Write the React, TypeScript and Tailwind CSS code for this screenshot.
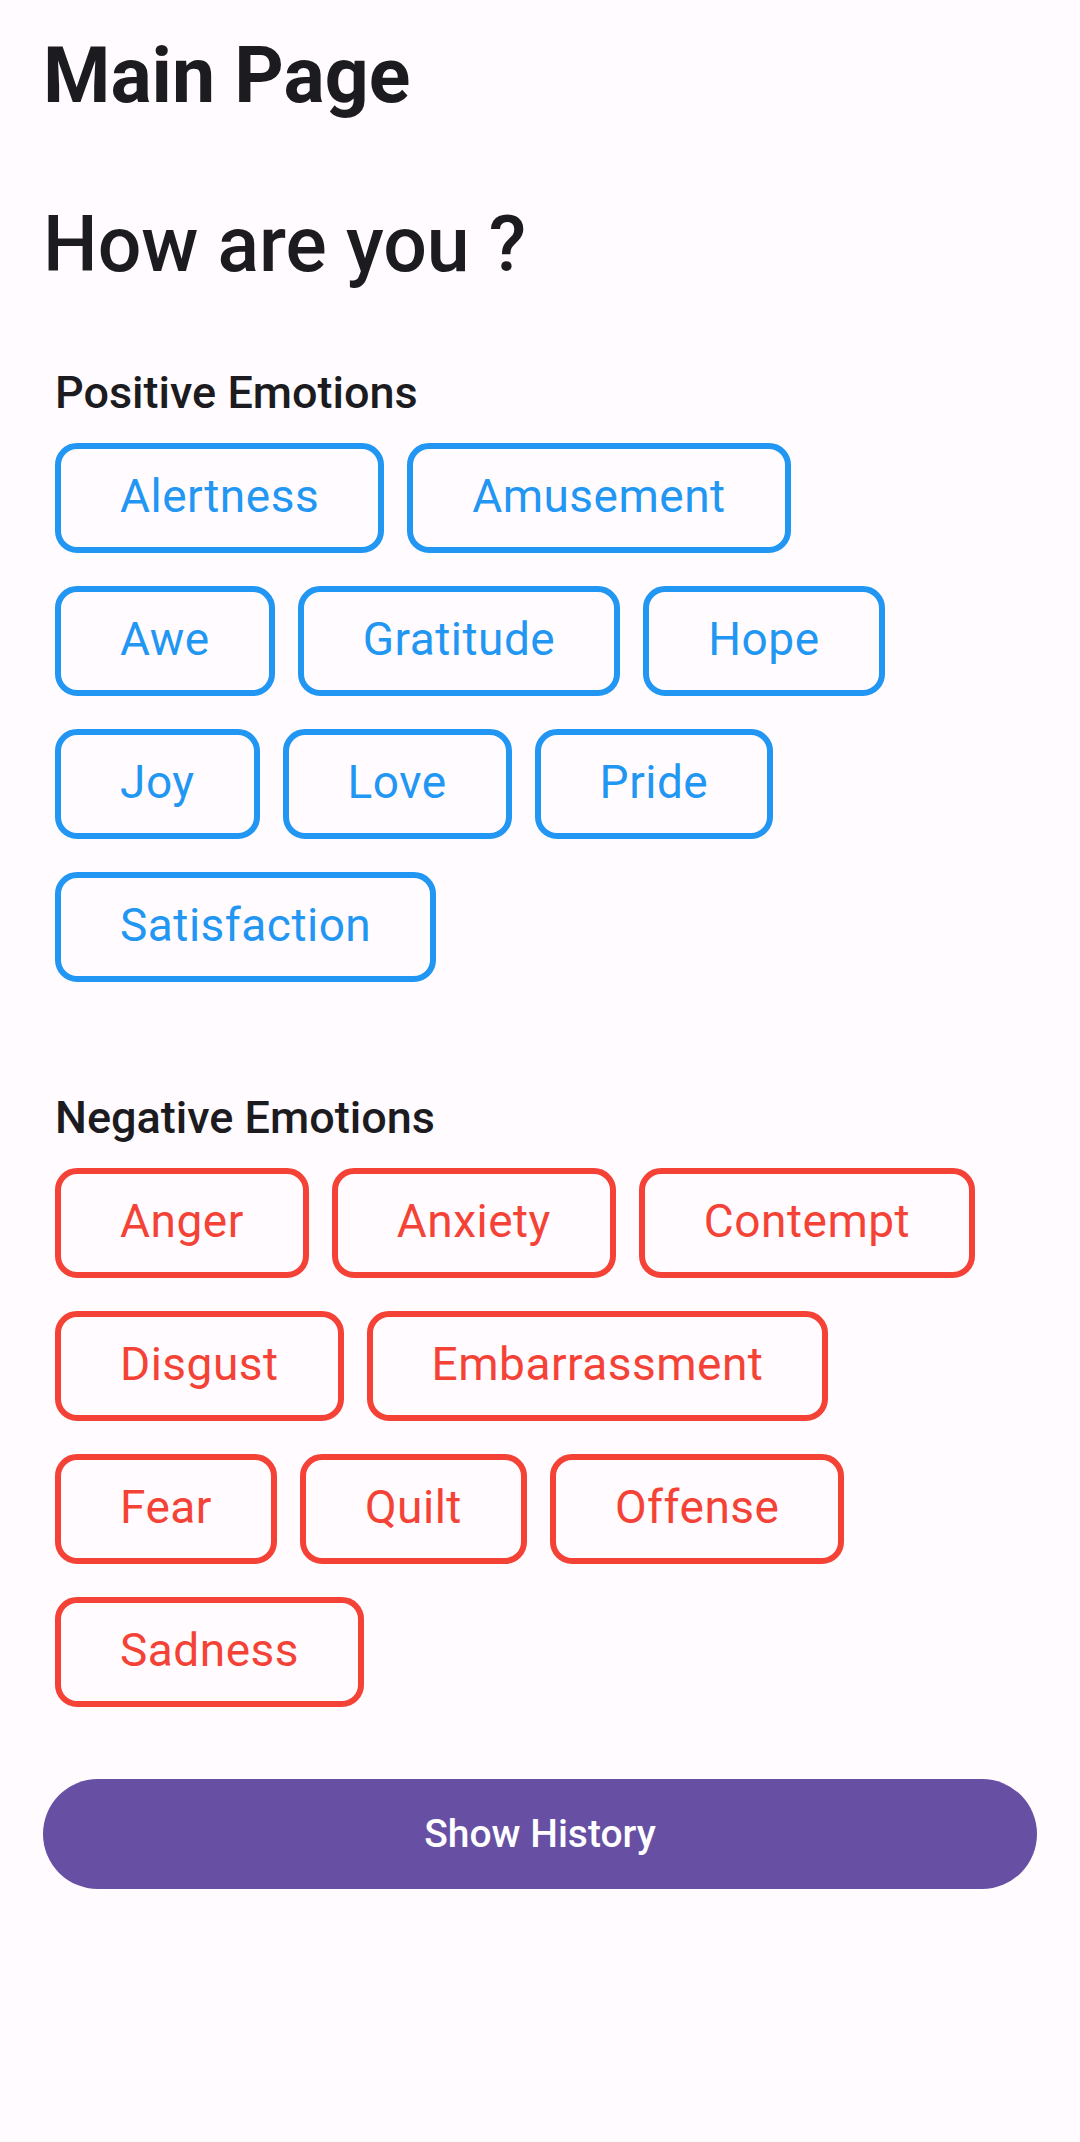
import React from "react";

const positive = [["Alertness", "Amusement"], ["Awe", "Gratitude", "Hope"], ["Joy", "Love", "Pride"], ["Satisfaction"]];
const negative = [["Anger", "Anxiety", "Contempt"], ["Disgust", "Embarrassment"], ["Fear", "Quilt", "Offense"], ["Sadness"]];

function Chip({ label, tone }: { label: string; tone: "blue" | "red" }) {
  const cls =
    tone === "blue"
      ? "border-[#2196F3] text-[#2196F3]"
      : "border-[#F44336] text-[#F44336]";
  return (
    <div
      className={`flex h-[110px] items-center justify-center rounded-[22px] border-[6px] px-[59px] pb-[4px] text-[46px] leading-none tracking-[0.5px] ${cls}`}
    >
      {label}
    </div>
  );
}

function Group({ title, rows, tone, top }: { title: string; rows: string[][]; tone: "blue" | "red"; top: string }) {
  return (
    <section className={`${top} pl-[12px]`}>
      <h2 className="text-[45px] font-medium leading-none text-[#1C1B1F]">{title}</h2>
      <div className="mt-[28px] flex flex-col gap-y-[33px]">
        {rows.map((row, i) => (
          <div key={i} className="flex gap-x-[23px]">
            {row.map((it) => (
              <Chip key={it} label={it} tone={tone} />
            ))}
          </div>
        ))}
      </div>
    </section>
  );
}

export default function App() {
  return (
    <div
      className="min-h-[2142px] w-[1080px] bg-[#FFFBFE] px-[43px] pt-[38px]"
      style={{ fontFamily: "Roboto, 'Noto Sans', sans-serif" }}
    >
      <h1 className="text-[77px] font-bold leading-none text-[#1C1B1F]">Main Page</h1>
      <h2 className="mt-[92px] text-[77px] font-medium leading-none text-[#1C1B1F]">How are you ?</h2>
      <Group title="Positive Emotions" rows={positive} tone="blue" top="mt-[86px]" />
      <Group title="Negative Emotions" rows={negative} tone="red" top="mt-[113px]" />
      <button className="mt-[72px] flex h-[110px] w-full items-center justify-center rounded-full bg-[#6750A4] text-[39px] font-medium leading-none text-white">
        Show History
      </button>
    </div>
  );
}
